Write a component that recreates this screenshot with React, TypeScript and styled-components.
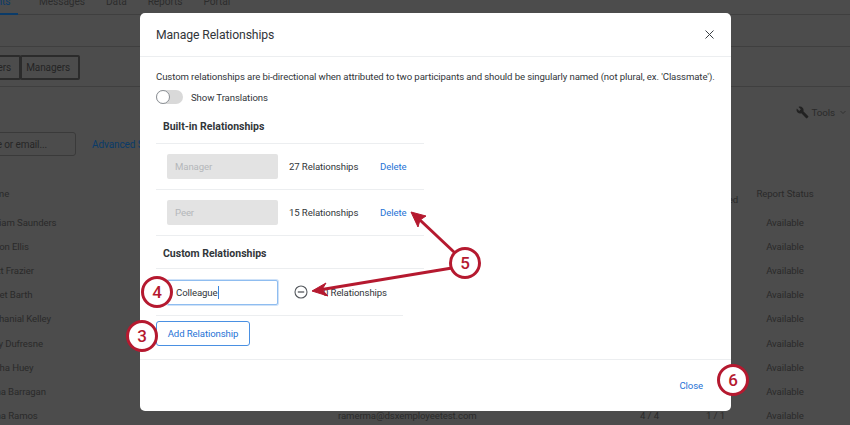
import React from "react";
import styled, { createGlobalStyle } from "styled-components";

const Global = createGlobalStyle`
  html, body { margin: 0; height: 100%; overflow: hidden; background: #4c4c4c; }
  #root { height: 100%; }
  * { box-sizing: border-box; }
  body { font-family: "Roboto", "Noto Sans", sans-serif; letter-spacing: -0.1px; }
`;

const Page = styled.div`
  position: relative;
  width: 850px;
  height: 425px;
  overflow: hidden;
  background: #4c4c4c;
  color: #2a2a2a;
  font-size: 9.6px;
`;
const Tabs = styled.div`
  display: flex;
  gap: 21px;
  height: 21px;
  margin-top: -6px;
  border-bottom: 1px solid #3f3f3f;
`;
const Tab = styled.div<{ $active?: boolean }>`
  height: 21px;
  font-size: 10.2px;
  line-height: 16px;
  white-space: nowrap;
  border-bottom: ${(p) => (p.$active ? "2px solid #0a3b69" : "none")};
  color: ${(p) => (p.$active ? "#0a3b69" : "#2c2c2c")};
  margin-left: ${(p) => (p.$active ? "-43px" : "0")};
  width: ${(p) => (p.$active ? "61px" : "auto")};
`;
const FilterBar = styled.div`
  height: 32px;
  border-bottom: 1px solid #3f3f3f;
`;
const SegmentRow = styled.div`
  display: flex;
  height: 40px;
  padding-top: 8px;
  margin-left: -40px;
  border-bottom: 1px solid #3f3f3f;
`;
const Segment = styled.div<{ $w: number }>`
  width: ${(p) => p.$w}px;
  height: 25px;
  border: 2px solid #2b2b2b;
  margin-right: -1px;
  border-radius: 2px;
  display: flex;
  align-items: center;
  justify-content: flex-end;
  padding-right: 8px;
  font-size: 10px;
  color: #242424;
`;
const ToolRow = styled.div`
  display: flex;
  justify-content: flex-end;
  align-items: center;
  gap: 3px;
  height: 26px;
  padding-right: 2px;
  margin-top: 12px;
  font-size: 9.8px;
`;
const SearchRow = styled.div`
  display: flex;
  align-items: center;
  height: 24px;
  margin-left: -60px;
  margin-top: 7px;
  gap: 16px;
`;
const SearchBox = styled.div`
  width: 136px;
  height: 24px;
  border: 1px solid #3a3a3a;
  border-radius: 3px;
  display: flex;
  align-items: center;
  justify-content: flex-end;
  padding-right: 28px;
  font-size: 10px;
  color: #262626;
  white-space: nowrap;
`;
const Advanced = styled.div`
  color: #0a3b69;
  font-size: 10px;
  white-space: nowrap;
`;
const Table = styled.div`
  margin: 21px 0 0 -16px;
  display: grid;
  grid-template-columns: 354px 302px 66px 32px 94px;
  grid-template-rows: 33px;
  grid-auto-rows: 24.2px;
  align-items: center;
  font-size: 9.6px;
  color: #2a2a2a;
`;
const Cell = styled.div<{ $center?: boolean }>`
  text-align: ${(p) => (p.$center ? "center" : "left")};
  white-space: nowrap;
`;
const HeadCell = styled(Cell)<{ $right?: boolean }>`
  line-height: 12px;
  justify-self: ${(p) => (p.$right ? "end" : "stretch")};
`;
const RowGroup = styled.div`
  display: contents;
`;
const Names = [
  "William Saunders",
  "Jason Ellis",
  "Matt Frazier",
  "Janet Barth",
  "Nathanial Kelley",
  "Amy Dufresne",
  "Sasha Huey",
  "Alma Barragan",
  "Erma Ramos",
];

const Modal = styled.div`
  position: absolute;
  left: 140px;
  top: 13px;
  width: 591px;
  height: 398px;
  background: #fff;
  border-radius: 5px;
  display: flex;
  flex-direction: column;
  color: #32363a;
`;
const ModalHeader = styled.div`
  height: 44px;
  flex: none;
  display: flex;
  align-items: center;
  justify-content: space-between;
  padding: 0 17px 0 16px;
  border-bottom: 1px solid #eceef0;
`;
const Title = styled.div`
  font-size: 12.2px;
  line-height: 18px;
`;
const CloseIcon = styled.svg`
  width: 9px;
  height: 9px;
`;
const ModalBody = styled.div`
  flex: 1;
  padding: 12px 16px 0;
`;
const Intro = styled.div`
  font-size: 9.6px;
  line-height: 16px;
  white-space: nowrap;
`;
const ToggleRow = styled.div`
  display: flex;
  align-items: center;
  gap: 8px;
  height: 14px;
  margin-top: 5px;
  font-size: 9.6px;
`;
const Toggle = styled.div`
  width: 27px;
  height: 14px;
  border-radius: 7px;
  background: #d9d9d9;
  display: flex;
`;
const Knob = styled.div`
  width: 14px;
  height: 14px;
  border-radius: 50%;
  background: #fff;
  border: 1px solid #8a8f94;
`;
const SectionTitle = styled.div<{ $w: number; $h: number; $pad: number }>`
  width: ${(p) => p.$w}px;
  height: ${(p) => p.$h}px;
  padding: ${(p) => p.$pad}px 7px 0;
  display: flex;
  align-items: center;
  font-size: 10.5px;
  font-weight: 700;
  letter-spacing: 0;
  border-bottom: 1px solid #eceef0;
`;
const Row = styled.div<{ $w: number; $h: number }>`
  width: ${(p) => p.$w}px;
  height: ${(p) => p.$h}px;
  padding-left: 11px;
  display: flex;
  align-items: center;
  font-size: 9.6px;
  border-bottom: 1px solid #eceef0;
`;
const NameBox = styled.div<{ $focus?: boolean }>`
  width: 111px;
  height: 25px;
  flex: none;
  border-radius: 2px;
  padding-left: 8px;
  display: flex;
  align-items: center;
  font-size: 9.6px;
  background: ${(p) => (p.$focus ? "#fff" : "#e3e3e3")};
  color: ${(p) => (p.$focus ? "#32363a" : "#b4b7ba")};
  border: ${(p) => (p.$focus ? "1px solid #8fbdf0" : "none")};
  box-shadow: ${(p) => (p.$focus ? "0 0 0 1px #cfe2f8" : "none")};
`;
const Caret = styled.span`
  width: 1px;
  height: 13px;
  background: #3a86de;
`;
const Count = styled.div<{ $w: number }>`
  width: ${(p) => p.$w}px;
  flex: none;
  margin-left: 11px;
  white-space: nowrap;
`;
const Link = styled.div`
  color: #1f73d6;
  font-size: 9.6px;
`;
const MinusIcon = styled.svg`
  width: 14px;
  height: 14px;
  margin-left: 16px;
  flex: none;
`;
const CustomCount = styled.div`
  margin-left: 15px;
  white-space: nowrap;
`;
const AddButton = styled.div`
  width: 94px;
  height: 25px;
  margin-top: 5px;
  border: 1px solid #4a90e2;
  border-radius: 3px;
  display: flex;
  align-items: center;
  justify-content: center;
  color: #1f73d6;
  font-size: 9.6px;
`;
const ModalFooter = styled.div`
  height: 52px;
  flex: none;
  display: flex;
  align-items: center;
  justify-content: flex-end;
  padding: 0 28px 0 0;
  border-top: 1px solid #eceef0;
`;
const Arrows = styled.svg`
  position: absolute;
  left: 0;
  top: 0;
  width: 850px;
  height: 425px;
  pointer-events: none;
`;
const Badge = styled.div<{ $x: number; $y: number }>`
  position: absolute;
  left: ${(p) => p.$x - 16}px;
  top: ${(p) => p.$y - 16}px;
  width: 32px;
  height: 32px;
  border-radius: 50%;
  background: #fff;
  border: 3px solid #b5192f;
  color: #b5192f;
  font-size: 17px;
  font-weight: 500;
  letter-spacing: 0;
  display: flex;
  align-items: center;
  justify-content: center;
`;

export default function App() {
  return (
    <Page>
      <Global />
      <Tabs>
        <Tab $active>Participants</Tab>
        <Tab>Messages</Tab>
        <Tab>Data</Tab>
        <Tab>Reports</Tab>
        <Tab>Portal</Tab>
      </Tabs>
      <FilterBar />
      <SegmentRow>
        <Segment $w={61}>Raters</Segment>
        <Segment $w={60}>Managers</Segment>
      </SegmentRow>
      <ToolRow>
        <svg width="13" height="13" viewBox="0 0 24 24" fill="#222">
          <path d="M22.7 19 13.6 9.9c.9-2.3.4-5-1.5-6.9C10.1 1 7.100.6 4.700 1.700L9 6 6 9 1.600 4.700C.4 7.100.9 10.100 2.900 12.100c1.900 1.900 4.600 2.400 6.900 1.500l9.100 9.100c.4.400 1 .4 1.400 0l2.300-2.300c.5-.4.5-1.100.1-1.400z" />
        </svg>
        <span>Tools</span>
        <svg width="10" height="10" viewBox="0 0 10 10" fill="none" stroke="#333">
          <path d="M2.500 4 5 6.500 7.500 4" />
        </svg>
      </ToolRow>
      <SearchRow>
        <SearchBox>Search by name or email...</SearchBox>
        <Advanced>Advanced Search</Advanced>
      </SearchRow>
      <Table>
        <RowGroup>
          <HeadCell>Name</HeadCell>
          <HeadCell />
          <HeadCell />
          <HeadCell $right>
            Sessions
            <br />
            Completed
          </HeadCell>
          <HeadCell $center>Report Status</HeadCell>
        </RowGroup>
        {Names.map((n, i) => (
          <RowGroup key={n}>
            <Cell>{n}</Cell>
            <Cell>{i === 8 ? "ramerma@dsxemployeetest.com" : ""}</Cell>
            <Cell>{i === 8 ? "4 / 4" : ""}</Cell>
            <Cell>{i === 8 ? "1 / 1" : ""}</Cell>
            <Cell $center>Available</Cell>
          </RowGroup>
        ))}
      </Table>

      <Modal>
        <ModalHeader>
          <Title>Manage Relationships</Title>
          <CloseIcon viewBox="0 0 9 9" fill="none" stroke="#3a3f44" strokeWidth="1">
            <path d="M.5.500l8 8M8.500.500l-8 8" />
          </CloseIcon>
        </ModalHeader>
        <ModalBody>
          <Intro>
            Custom relationships are bi-directional when attributed to two participants and should be singularly named
            (not plural, ex. 'Classmate').
          </Intro>
          <ToggleRow>
            <Toggle>
              <Knob />
            </Toggle>
            Show Translations
          </ToggleRow>
          <SectionTitle $w={268} $h={40} $pad={6}>Built-in Relationships</SectionTitle>
          <Row $w={268} $h={46}>
            <NameBox>Manager</NameBox>
            <Count $w={91}>27 Relationships</Count>
            <Link>Delete</Link>
          </Row>
          <Row $w={268} $h={46}>
            <NameBox>Peer</NameBox>
            <Count $w={91}>15 Relationships</Count>
            <Link>Delete</Link>
          </Row>
          <SectionTitle $w={268} $h={33} $pad={2}>Custom Relationships</SectionTitle>
          <Row $w={247} $h={47}>
            <NameBox $focus>
              Colleague
              <Caret />
            </NameBox>
            <MinusIcon viewBox="0 0 14 14" fill="none" stroke="#55595e" strokeWidth="1.100">
              <circle cx="7" cy="7" r="6" />
              <path d="M3.800 7h6.400" strokeWidth="1.300" />
            </MinusIcon>
            <CustomCount>0 Relationships</CustomCount>
          </Row>
          <AddButton>Add Relationship</AddButton>
        </ModalBody>
        <ModalFooter>
          <Link>Close</Link>
        </ModalFooter>
      </Modal>

      <Arrows viewBox="0 0 850 425" fill="none">
        <path d="M455 253 420 220" stroke="#b5192f" strokeWidth="3" />
        <path d="M411 212 426 216 420 220 418 227z" fill="#b5192f" stroke="#b5192f" strokeWidth="1" />
        <path d="M452 268 322 289.500" stroke="#b5192f" strokeWidth="3" />
        <path d="M312 291 326 283 322 289.500 328 296z" fill="#b5192f" stroke="#b5192f" strokeWidth="1" />
      </Arrows>
      <Badge $x={465} $y={263}>5</Badge>
      <Badge $x={157} $y={292}>4</Badge>
      <Badge $x={142} $y={336}>3</Badge>
      <Badge $x={733} $y={380}>6</Badge>
    </Page>
  );
}
